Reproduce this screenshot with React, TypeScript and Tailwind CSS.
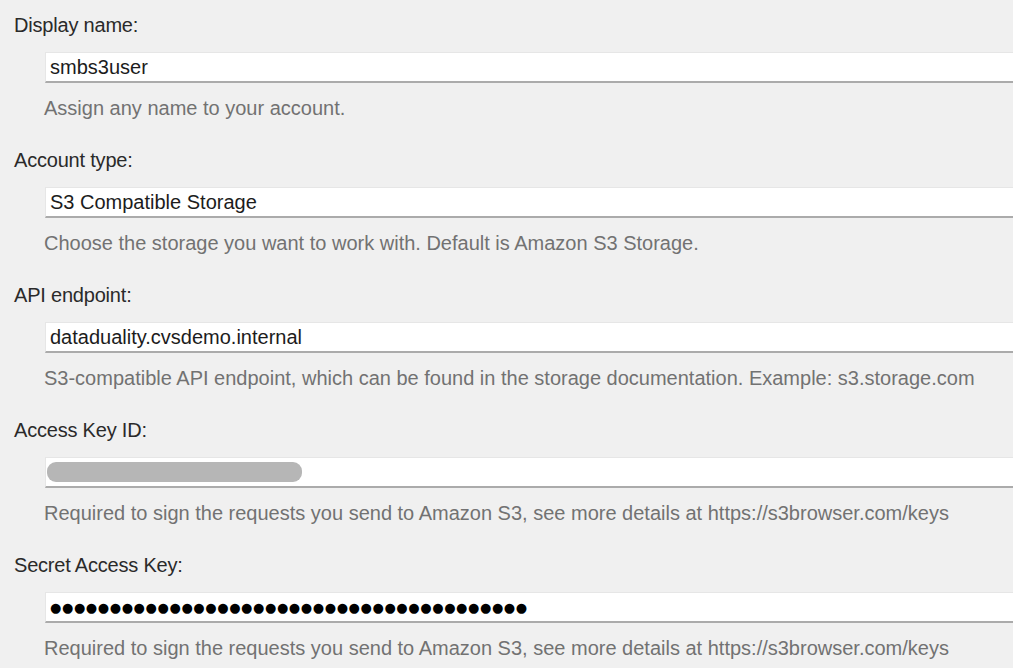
import React from "react";

type Field = {
  label: string;
  value?: string;
  hint: string;
  kind?: "text" | "redacted" | "password";
};

const fields: Field[] = [
  { label: "Display name:", value: "smbs3user", hint: "Assign any name to your account." },
  {
    label: "Account type:",
    value: "S3 Compatible Storage",
    hint: "Choose the storage you want to work with. Default is Amazon S3 Storage.",
  },
  {
    label: "API endpoint:",
    value: "dataduality.cvsdemo.internal",
    hint: "S3-compatible API endpoint, which can be found in the storage documentation. Example: s3.storage.com",
  },
  {
    label: "Access Key ID:",
    kind: "redacted",
    hint: "Required to sign the requests you send to Amazon S3, see more details at https://s3browser.com/keys",
  },
  {
    label: "Secret Access Key:",
    kind: "password",
    value: "●".repeat(40),
    hint: "Required to sign the requests you send to Amazon S3, see more details at https://s3browser.com/keys",
  },
];

const FieldBlock = ({ field }: { field: Field }) => {
  return (
    <div className="flex flex-col">
      <div className="h-6 leading-6 pl-[14px] text-[20px] text-[#2a2a2a] tracking-[-0.2px]">
        {field.label}
      </div>
      <div className="mt-[15px] ml-[45px] w-[1000px] h-[31px] bg-white border-t border-l border-[#e6e6e6] border-b-2 border-b-[#ababab] flex items-center pl-1">
        {field.kind === "redacted" ? (
          <div className="w-[255px] h-5 -ml-[3px] rounded-[9px] bg-[#b6b6b6]" />
        ) : field.kind === "password" ? (
          <span className="text-[13px] tracking-[0.6px] text-black font-['DejaVu_Sans',sans-serif] pt-px">
            {field.value}
          </span>
        ) : (
          <span className="text-[20px] text-[#1c1c1c]">{field.value}</span>
        )}
      </div>
      <div className="mt-[13px] h-6 leading-6 pl-[44px] text-[20px] text-[#727272] whitespace-nowrap">
        {field.hint}
      </div>
    </div>
  );
};

export default function App() {
  return (
    <div className="w-[1013px] h-[668px] overflow-hidden bg-[#f0f0f0] font-['Liberation_Sans',Arial,sans-serif] pt-[13px] flex flex-col gap-[28px]">
      {fields.map((f) => (
        <FieldBlock key={f.label} field={f} />
      ))}
    </div>
  );
}
